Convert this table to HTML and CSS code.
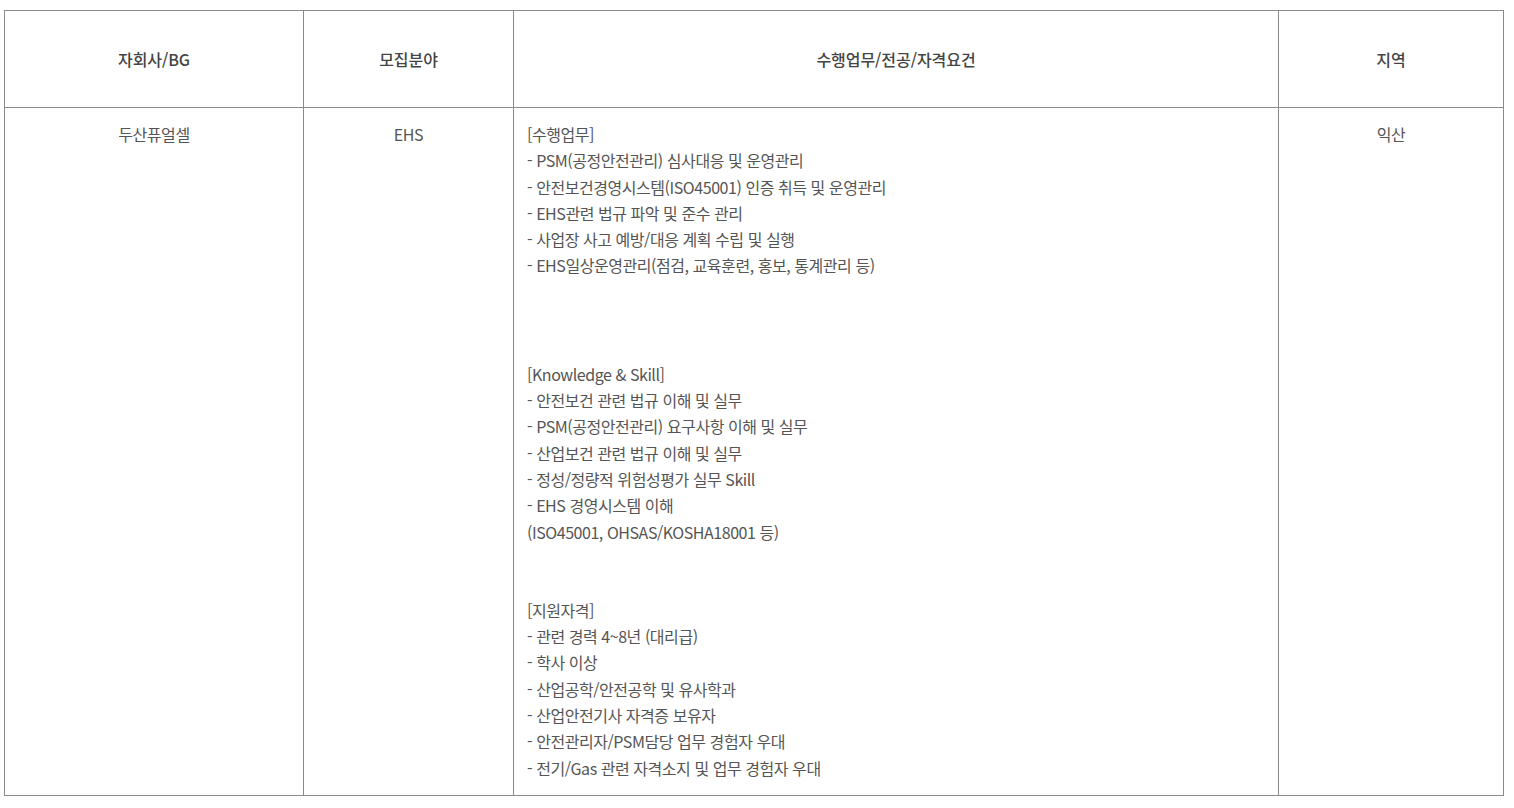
FILE: index.html
```html
<!DOCTYPE html>
<html lang="ko">
<head>
<meta charset="utf-8">
<link rel="stylesheet" href="styles.css">
</head>
<body>
<div class="wrap">
<table class="job">
  <colgroup>
    <col class="c1"><col class="c2"><col class="c3"><col class="c4">
  </colgroup>
  <thead>
    <tr>
      <th>자회사/BG</th>
      <th>모집분야</th>
      <th>수행업무/전공/자격요건</th>
      <th>지역</th>
    </tr>
  </thead>
  <tbody>
    <tr>
      <td class="center">두산퓨얼셀</td>
      <td class="center">EHS</td>
      <td class="detail">
        <div class="sec">
          <p>[수행업무]</p>
          <p>- PSM(공정안전관리) 심사대응 및 운영관리</p>
          <p>- 안전보건경영시스템(ISO45001) 인증 취득 및 운영관리</p>
          <p>- EHS관련 법규 파악 및 준수 관리</p>
          <p>- 사업장 사고 예방/대응 계획 수립 및 실행</p>
          <p>- EHS일상운영관리(점검, 교육훈련, 홍보, 통계관리 등)</p>
        </div>
        <div class="sec gap1">
          <p>[Knowledge &amp; Skill]</p>
          <p>- 안전보건 관련 법규 이해 및 실무</p>
          <p>- PSM(공정안전관리) 요구사항 이해 및 실무</p>
          <p>- 산업보건 관련 법규 이해 및 실무</p>
          <p>- 정성/정량적 위험성평가 실무 Skill</p>
          <p>- EHS 경영시스템 이해</p>
          <p>(ISO45001, OHSAS/KOSHA18001 등)</p>
        </div>
        <div class="sec gap2">
          <p>[지원자격]</p>
          <p>- 관련 경력 4~8년 (대리급)</p>
          <p>- 학사 이상</p>
          <p>- 산업공학/안전공학 및 유사학과</p>
          <p>- 산업안전기사 자격증 보유자</p>
          <p>- 안전관리자/PSM담당 업무 경험자 우대</p>
          <p>- 전기/Gas 관련 자격소지 및 업무 경험자 우대</p>
        </div>
      </td>
      <td class="center">익산</td>
    </tr>
  </tbody>
</table>
</div>
</body>
</html>
```
FILE: styles.css
```css
* { box-sizing: border-box; }
html, body { margin: 0; padding: 0; background: #fff; }
body {
  font-family: "Noto Sans CJK KR", "Noto Sans", sans-serif;
  color: #555;
}
.wrap { padding: 10px 0 0 4px; }
.job {
  width: 1499px;
  border-collapse: collapse;
  table-layout: fixed;
}
.c1 { width: 299px; }
.c2 { width: 210px; }
.c3 { width: 765px; }
.c4 { width: 225px; }
.job th, .job td {
  border: 1px solid #8a8a8a;
}
.job th {
  height: 97px;
  font-size: 16px;
  font-weight: 500;
  color: #444;
  letter-spacing: -0.05px;
  text-align: center;
  vertical-align: middle;
}
.job td {
  font-size: 16px;
  letter-spacing: -0.45px;
  line-height: 26.3px;
  vertical-align: top;
  padding: 13px 13px 14px;
}
.job td.center { text-align: center; }
.sec p { margin: 0; }
.gap1 { margin-top: 82px; }
.gap2 { margin-top: 52px; }
```
